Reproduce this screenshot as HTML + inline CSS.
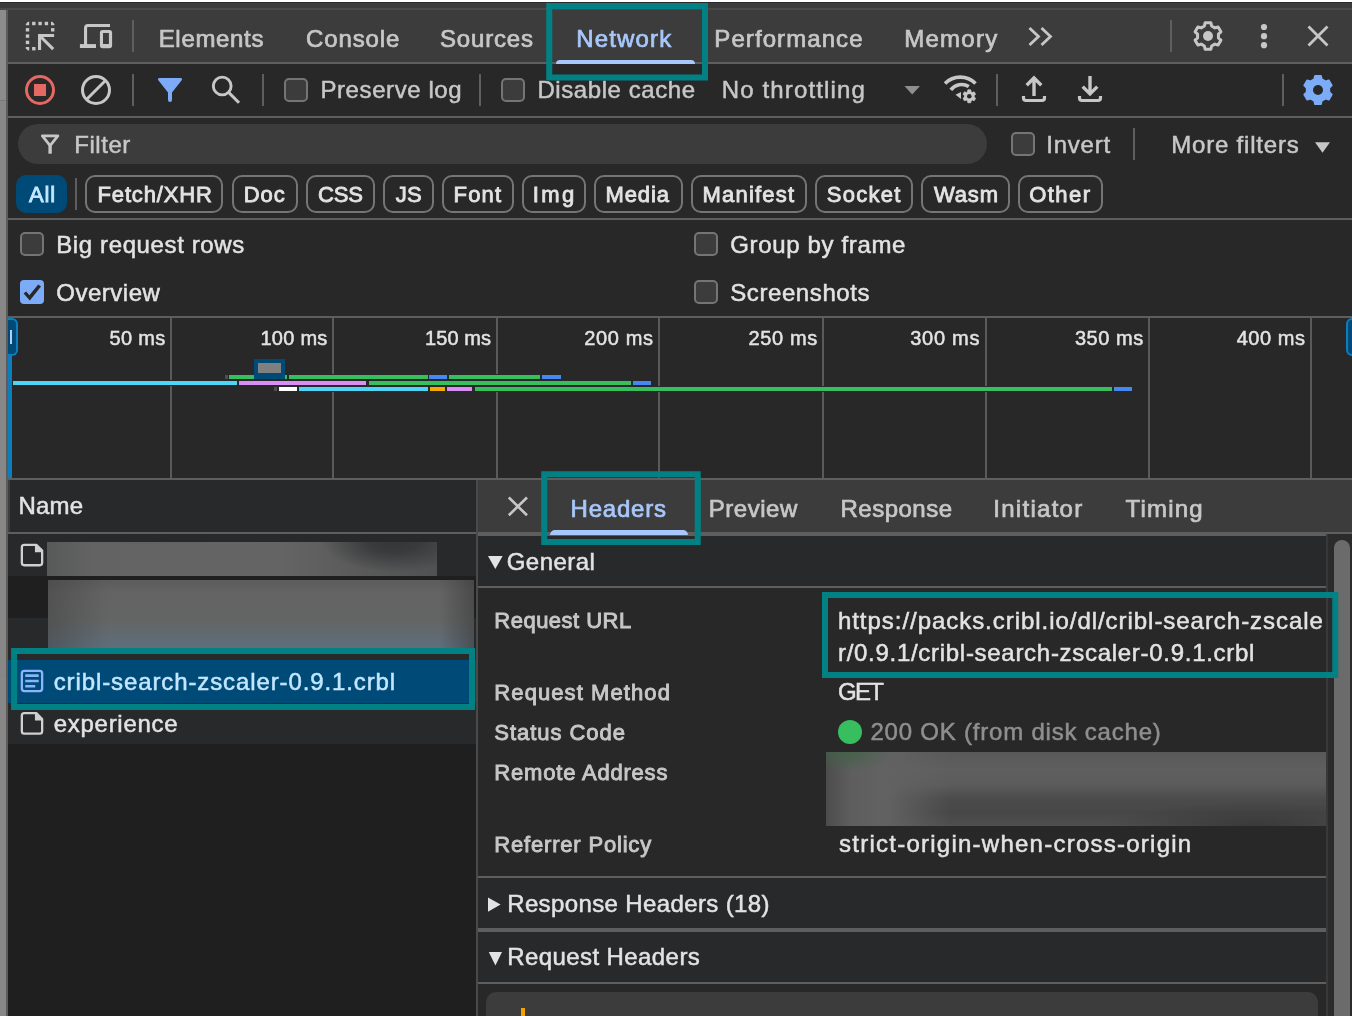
<!DOCTYPE html>
<html><head><meta charset="utf-8"><title>DevTools Network</title>
<style>
html,body{margin:0;padding:0;}
body{width:1352px;height:1016px;overflow:hidden;background:#282828;position:relative;font-family:"Liberation Sans", sans-serif;}
.b{position:absolute;}
.tl{position:absolute;left:0;top:0;width:1352px;height:1016px;will-change:transform;}
.t{position:absolute;white-space:nowrap;line-height:1;font-weight:400;}
svg.ov{position:absolute;left:0;top:0;}
</style></head><body>
<div class="b" style="left:0px;top:0px;width:1352px;height:2px;background:#ffffff;"></div>
<div class="b" style="left:0px;top:2px;width:1352px;height:1px;background:#2a2a2a;"></div>
<div class="b" style="left:0px;top:3px;width:1352px;height:5px;background:#3b3b3b;"></div>
<div class="b" style="left:0px;top:8px;width:1352px;height:2px;background:#484a48;"></div>
<div class="b" style="left:8px;top:10px;width:1344px;height:52px;background:#3c3c3c;"></div>
<div class="b" style="left:8px;top:62px;width:1344px;height:2px;background:#5e5e5e;"></div>
<div class="b" style="left:8px;top:64px;width:1344px;height:52px;background:#282828;"></div>
<div class="b" style="left:8px;top:116px;width:1344px;height:2px;background:#5e5e5e;"></div>
<div class="b" style="left:0px;top:10px;width:6px;height:90px;background:#8c8c8c;"></div>
<div class="b" style="left:0px;top:100px;width:6px;height:1px;background:#7a7a7a;"></div>
<div class="b" style="left:0px;top:101px;width:6px;height:915px;background:#878787;"></div>
<div class="b" style="left:6px;top:10px;width:2px;height:1006px;background:#5f5b58;"></div>
<div class="b" style="left:0px;top:678.5px;width:5px;height:1.6px;background:#7f8c9c;"></div>
<div class="b" style="left:132px;top:20px;width:2px;height:32px;background:#5e5e5e;"></div>
<div class="b" style="left:1170px;top:20px;width:2px;height:32px;background:#5e5e5e;"></div>
<div class="b" style="left:132px;top:74px;width:2px;height:32px;background:#5e5e5e;"></div>
<div class="b" style="left:262px;top:74px;width:2px;height:32px;background:#5e5e5e;"></div>
<div class="b" style="left:479px;top:74px;width:2px;height:32px;background:#5e5e5e;"></div>
<div class="b" style="left:996px;top:74px;width:2px;height:32px;background:#5e5e5e;"></div>
<div class="b" style="left:1282px;top:74px;width:2px;height:32px;background:#5e5e5e;"></div>
<div class="b" style="left:18px;top:124px;width:969px;height:40px;background:#3c3c3c;border-radius:20px;"></div>
<div class="b" style="left:1133px;top:128px;width:2px;height:32px;background:#5e5e5e;"></div>
<div class="b" style="left:16px;top:175px;width:50.75px;height:37.5px;background:#004a77;border-radius:10px;"></div>
<div class="b" style="left:85px;top:175px;width:138.25px;height:37.5px;background:transparent;border-radius:10px;border:2px solid #757575;box-sizing:border-box;"></div>
<div class="b" style="left:232px;top:175px;width:65.5px;height:37.5px;background:transparent;border-radius:10px;border:2px solid #757575;box-sizing:border-box;"></div>
<div class="b" style="left:306.25px;top:175px;width:68.75px;height:37.5px;background:transparent;border-radius:10px;border:2px solid #757575;box-sizing:border-box;"></div>
<div class="b" style="left:383px;top:175px;width:51.25px;height:37.5px;background:transparent;border-radius:10px;border:2px solid #757575;box-sizing:border-box;"></div>
<div class="b" style="left:442px;top:175px;width:71.75px;height:37.5px;background:transparent;border-radius:10px;border:2px solid #757575;box-sizing:border-box;"></div>
<div class="b" style="left:522px;top:175px;width:64.25px;height:37.5px;background:transparent;border-radius:10px;border:2px solid #757575;box-sizing:border-box;"></div>
<div class="b" style="left:594.25px;top:175px;width:88.25px;height:37.5px;background:transparent;border-radius:10px;border:2px solid #757575;box-sizing:border-box;"></div>
<div class="b" style="left:691.25px;top:175px;width:115.5px;height:37.5px;background:transparent;border-radius:10px;border:2px solid #757575;box-sizing:border-box;"></div>
<div class="b" style="left:815px;top:175px;width:98px;height:37.5px;background:transparent;border-radius:10px;border:2px solid #757575;box-sizing:border-box;"></div>
<div class="b" style="left:921.25px;top:175px;width:88.25px;height:37.5px;background:transparent;border-radius:10px;border:2px solid #757575;box-sizing:border-box;"></div>
<div class="b" style="left:1018.25px;top:175px;width:84.25px;height:37.5px;background:transparent;border-radius:10px;border:2px solid #757575;box-sizing:border-box;"></div>
<div class="b" style="left:75px;top:178px;width:2px;height:32px;background:#5e5e5e;"></div>
<div class="b" style="left:8px;top:218px;width:1344px;height:2px;background:#5e5e5e;"></div>
<div class="b" style="left:284px;top:78px;width:24px;height:24px;background:#3c3c3c;border-radius:5px;border:2px solid #757575;box-sizing:border-box;"></div>
<div class="b" style="left:501px;top:78px;width:24px;height:24px;background:#3c3c3c;border-radius:5px;border:2px solid #757575;box-sizing:border-box;"></div>
<div class="b" style="left:1011px;top:132px;width:24px;height:24px;background:#3c3c3c;border-radius:5px;border:2px solid #757575;box-sizing:border-box;"></div>
<div class="b" style="left:20px;top:232px;width:24px;height:24px;background:#3c3c3c;border-radius:5px;border:2px solid #757575;box-sizing:border-box;"></div>
<svg class="b" style="left:20px;top:280px" width="24" height="24" viewBox="0 0 24 24"><rect width="24" height="24" rx="4" fill="#7cacf8"/><path d="M3.6 13.6 L6.2 11.6 L9.4 15.2 L18.2 4.6 L21 6.6 L9.8 20.4 Z" fill="#282828"/></svg>
<div class="b" style="left:694px;top:232px;width:24px;height:24px;background:#3c3c3c;border-radius:5px;border:2px solid #757575;box-sizing:border-box;"></div>
<div class="b" style="left:694px;top:280px;width:24px;height:24px;background:#3c3c3c;border-radius:5px;border:2px solid #757575;box-sizing:border-box;"></div>
<div class="b" style="left:8px;top:316px;width:1344px;height:2px;background:#5e5e5e;"></div>
<div class="b" style="left:8px;top:478px;width:1344px;height:2px;background:#5e5e5e;"></div>
<div class="b" style="left:170px;top:318px;width:2px;height:160px;background:#5a5a5a;"></div>
<div class="b" style="left:332px;top:318px;width:2px;height:160px;background:#5a5a5a;"></div>
<div class="b" style="left:495.75px;top:318px;width:2px;height:160px;background:#5a5a5a;"></div>
<div class="b" style="left:658.25px;top:318px;width:2px;height:160px;background:#5a5a5a;"></div>
<div class="b" style="left:822px;top:318px;width:2px;height:160px;background:#5a5a5a;"></div>
<div class="b" style="left:984.5px;top:318px;width:2px;height:160px;background:#5a5a5a;"></div>
<div class="b" style="left:1148px;top:318px;width:2px;height:160px;background:#5a5a5a;"></div>
<div class="b" style="left:1310px;top:318px;width:2px;height:160px;background:#5a5a5a;"></div>
<div class="b" style="left:224px;top:374px;width:338px;height:6px;background:#282828;"></div>
<div class="b" style="left:12px;top:380px;width:641px;height:6px;background:#282828;"></div>
<div class="b" style="left:273px;top:386px;width:861px;height:6px;background:#282828;"></div>
<div class="b" style="left:225px;top:375px;width:2.5px;height:4.2px;background:#4e4e4e;"></div>
<div class="b" style="left:229.25px;top:375px;width:57.75px;height:4.2px;background:#37be5f;"></div>
<div class="b" style="left:289.25px;top:375px;width:138.25px;height:4.2px;background:#37be5f;"></div>
<div class="b" style="left:429.25px;top:375px;width:17.75px;height:4.2px;background:#4688f1;"></div>
<div class="b" style="left:449.25px;top:375px;width:90.75px;height:4.2px;background:#37be5f;"></div>
<div class="b" style="left:542px;top:375px;width:18.5px;height:4.2px;background:#4688f1;"></div>
<div class="b" style="left:13px;top:381.25px;width:223.75px;height:4.2px;background:#4fd3f7;"></div>
<div class="b" style="left:238.75px;top:381.25px;width:127.5px;height:4.2px;background:#d88ff5;"></div>
<div class="b" style="left:368.75px;top:381.25px;width:262.0px;height:4.2px;background:#37be5f;"></div>
<div class="b" style="left:632.75px;top:381.25px;width:18.5px;height:4.2px;background:#4688f1;"></div>
<div class="b" style="left:274.25px;top:387.25px;width:2.5px;height:4.2px;background:#4e4e4e;"></div>
<div class="b" style="left:278.75px;top:387.25px;width:18.25px;height:4.2px;background:#ffffff;"></div>
<div class="b" style="left:298.75px;top:387.25px;width:129.25px;height:4.2px;background:#4fd3f7;"></div>
<div class="b" style="left:430px;top:387.25px;width:15px;height:4.2px;background:#f5ab00;"></div>
<div class="b" style="left:447px;top:387.25px;width:25px;height:4.2px;background:#d88ff5;"></div>
<div class="b" style="left:474.5px;top:387.25px;width:637.75px;height:4.2px;background:#37be5f;"></div>
<div class="b" style="left:1114px;top:387.25px;width:18.25px;height:4.2px;background:#4688f1;"></div>
<div class="b" style="left:254.25px;top:359.25px;width:30.75px;height:20px;background:#004a77;"></div>
<div class="b" style="left:258.25px;top:363px;width:23px;height:9.5px;background:#808080;"></div>
<div class="b" style="left:8px;top:318px;width:4px;height:160px;background:#0a7ebf;"></div>
<div class="b" style="left:8px;top:318px;width:10px;height:38px;background:#004a77;border:2px solid #0a7ebf;border-left:none;border-radius:0 6px 6px 0;box-sizing:border-box;"></div>
<div class="b" style="left:10px;top:330px;width:2.2px;height:14px;background:#b4cdfc;"></div>
<div class="b" style="left:1346px;top:318px;width:12px;height:38px;background:#004a77;border:2px solid #0a7ebf;border-radius:6px 0 0 6px;box-sizing:border-box;"></div>
<div class="b" style="left:8px;top:480px;width:468px;height:52px;background:#28292a;"></div>
<div class="b" style="left:8px;top:480px;width:2px;height:52px;background:#3f3f3f;"></div>
<div class="b" style="left:8px;top:532px;width:468px;height:2px;background:#5e5e5e;"></div>
<div class="b" style="left:8px;top:534px;width:468px;height:42px;background:#28292a;"></div>
<div class="b" style="left:8px;top:576px;width:468px;height:42px;background:#1f1f1f;"></div>
<div class="b" style="left:8px;top:618px;width:468px;height:42px;background:#28292a;"></div>
<div class="b" style="left:8px;top:660px;width:468px;height:42.5px;background:#004a77;"></div>
<div class="b" style="left:8px;top:702.5px;width:468px;height:41.5px;background:#28292a;"></div>
<div class="b" style="left:8px;top:744px;width:468px;height:272px;background:#1f1f1f;"></div>
<div class="b" style="left:47px;top:542px;width:390px;height:34px;background:radial-gradient(ellipse 72px 30px at 89% 0%, rgba(52,54,56,1) 0%, rgba(52,54,56,.85) 35%, rgba(60,60,62,0) 100%),linear-gradient(90deg,#585959 0%,#636363 12%,#646464 60%,#5a5a5a 80%,#505152 100%);"></div>
<div class="b" style="left:48px;top:580px;width:426px;height:68px;background:linear-gradient(90deg,rgba(60,60,60,.45) 0%,rgba(70,70,70,0) 14%,rgba(70,70,70,0) 92%,rgba(50,50,50,.5) 100%),linear-gradient(180deg,#5c5c5c 0%,#636363 18%,#636565 58%,#5f6e7b 100%);"></div>
<div class="b" style="left:476px;top:480px;width:2px;height:536px;background:#4a4a4a;"></div>
<div class="b" style="left:478px;top:480px;width:874px;height:52.3px;background:#3c3c3c;"></div>
<div class="b" style="left:478px;top:532.3px;width:874px;height:3.7px;background:#5e5e5e;"></div>
<div class="b" style="left:478px;top:536px;width:848px;height:50px;background:#28292a;"></div>
<div class="b" style="left:478px;top:586px;width:848px;height:2px;background:#5e5e5e;"></div>
<div class="b" style="left:478px;top:588px;width:848px;height:288px;background:#282828;"></div>
<div class="b" style="left:478px;top:876px;width:848px;height:2px;background:#5e5e5e;"></div>
<div class="b" style="left:478px;top:878px;width:848px;height:50px;background:#28292a;"></div>
<div class="b" style="left:478px;top:928px;width:848px;height:4px;background:#5e5e5e;"></div>
<div class="b" style="left:478px;top:932px;width:848px;height:50px;background:#28292a;"></div>
<div class="b" style="left:478px;top:982px;width:848px;height:2px;background:#5e5e5e;"></div>
<div class="b" style="left:478px;top:984px;width:848px;height:32px;background:#282828;"></div>
<div class="b" style="left:486px;top:992px;width:832px;height:40px;background:#3c3c3c;border-radius:10px;"></div>
<div class="b" style="left:521.25px;top:1007.5px;width:3.75px;height:10px;background:#f5a300;"></div>
<div class="b" style="left:826px;top:752px;width:500px;height:74px;background:radial-gradient(ellipse 46px 20px at 4% 0%, rgba(66,98,72,.85), rgba(66,98,72,0) 100%),radial-gradient(ellipse 150px 24px at 86% 100%, rgba(56,56,56,.95), rgba(56,56,56,0) 100%),linear-gradient(90deg, rgba(76,76,76,1) 0%, rgba(94,94,94,1) 5%, rgba(98,98,98,1) 12%, rgba(96,96,96,0) 25%),linear-gradient(180deg,#595959 0%,#5f5f5f 25%,#5b5b5b 45%,#4b4b4b 63%,#474747 82%,#4f4f4f 100%);"></div>
<div class="b" style="left:838px;top:720px;width:24px;height:24px;background:#37be5f;border-radius:50%;"></div>
<div class="b" style="left:1326px;top:534px;width:1.6px;height:482px;background:#393939;"></div>
<div class="b" style="left:1327.6px;top:534px;width:24.4px;height:482px;background:#2b2b2b;"></div>
<div class="b" style="left:1334px;top:540px;width:15.8px;height:496px;background:#6b6b6b;border-radius:8px;"></div>
<div class="b" style="left:555.5px;top:59.5px;width:139px;height:4.5px;background:#a8c7fa;border-radius:5px 5px 0 0;"></div>
<div class="b" style="left:549.5px;top:529.5px;width:138.5px;height:5px;background:#a8c7fa;border-radius:5px 5px 0 0;"></div>
<div class="tl">
<span class="t" style="left:158.69px;top:26.93px;font-size:24px;letter-spacing:0.676px;color:#c7c7c7;-webkit-text-stroke:0.72px #c7c7c7;">Elements</span>
<span class="t" style="left:306.04px;top:26.93px;font-size:24px;letter-spacing:0.869px;color:#c7c7c7;-webkit-text-stroke:0.72px #c7c7c7;">Console</span>
<span class="t" style="left:440.04px;top:26.93px;font-size:24px;letter-spacing:0.814px;color:#c7c7c7;-webkit-text-stroke:0.72px #c7c7c7;">Sources</span>
<span class="t" style="left:714.29px;top:26.93px;font-size:24px;letter-spacing:1.088px;color:#c7c7c7;-webkit-text-stroke:0.72px #c7c7c7;">Performance</span>
<span class="t" style="left:904.29px;top:26.93px;font-size:24px;letter-spacing:1.250px;color:#c7c7c7;-webkit-text-stroke:0.72px #c7c7c7;">Memory</span>
<span class="t" style="left:576.29px;top:26.93px;font-size:24px;letter-spacing:1.151px;color:#a8c7fa;-webkit-text-stroke:0.72px #a8c7fa;">Network</span>
<span class="t" style="left:320.45px;top:78.43px;font-size:24px;letter-spacing:0.588px;color:#c7c7c7;-webkit-text-stroke:0.5px #c7c7c7;">Preserve log</span>
<span class="t" style="left:537.45px;top:78.43px;font-size:24px;letter-spacing:0.579px;color:#c7c7c7;-webkit-text-stroke:0.5px #c7c7c7;">Disable cache</span>
<span class="t" style="left:721.70px;top:78.43px;font-size:24px;letter-spacing:1.150px;color:#c7c7c7;-webkit-text-stroke:0.5px #c7c7c7;">No throttling</span>
<span class="t" style="left:74.20px;top:132.68px;font-size:24px;letter-spacing:0.552px;color:#c7c7c7;-webkit-text-stroke:0.5px #c7c7c7;">Filter</span>
<span class="t" style="left:1046.20px;top:132.68px;font-size:24px;letter-spacing:0.799px;color:#c7c7c7;-webkit-text-stroke:0.5px #c7c7c7;">Invert</span>
<span class="t" style="left:1171.20px;top:132.68px;font-size:24px;letter-spacing:0.810px;color:#c7c7c7;-webkit-text-stroke:0.5px #c7c7c7;">More filters</span>
<span class="t" style="left:29.09px;top:183.98px;font-size:22px;letter-spacing:0.754px;color:#c2e7ff;-webkit-text-stroke:0.85px #c2e7ff;">All</span>
<span class="t" style="left:97.59px;top:183.98px;font-size:22px;letter-spacing:0.828px;color:#e3e3e3;-webkit-text-stroke:0.85px #e3e3e3;">Fetch/XHR</span>
<span class="t" style="left:243.84px;top:183.98px;font-size:22px;letter-spacing:0.848px;color:#e3e3e3;-webkit-text-stroke:0.85px #e3e3e3;">Doc</span>
<span class="t" style="left:318.09px;top:183.98px;font-size:22px;letter-spacing:-0.246px;color:#e3e3e3;-webkit-text-stroke:0.85px #e3e3e3;">CSS</span>
<span class="t" style="left:395.84px;top:183.98px;font-size:22px;letter-spacing:0.070px;color:#e3e3e3;-webkit-text-stroke:0.85px #e3e3e3;">JS</span>
<span class="t" style="left:453.59px;top:183.98px;font-size:22px;letter-spacing:1.137px;color:#e3e3e3;-webkit-text-stroke:0.85px #e3e3e3;">Font</span>
<span class="t" style="left:532.84px;top:183.98px;font-size:22px;letter-spacing:2.316px;color:#e3e3e3;-webkit-text-stroke:0.85px #e3e3e3;">Img</span>
<span class="t" style="left:605.59px;top:183.98px;font-size:22px;letter-spacing:0.846px;color:#e3e3e3;-webkit-text-stroke:0.85px #e3e3e3;">Media</span>
<span class="t" style="left:702.59px;top:183.98px;font-size:22px;letter-spacing:1.184px;color:#e3e3e3;-webkit-text-stroke:0.85px #e3e3e3;">Manifest</span>
<span class="t" style="left:826.84px;top:183.98px;font-size:22px;letter-spacing:1.235px;color:#e3e3e3;-webkit-text-stroke:0.85px #e3e3e3;">Socket</span>
<span class="t" style="left:934.09px;top:183.98px;font-size:22px;letter-spacing:0.795px;color:#e3e3e3;-webkit-text-stroke:0.85px #e3e3e3;">Wasm</span>
<span class="t" style="left:1029.34px;top:183.98px;font-size:22px;letter-spacing:1.406px;color:#e3e3e3;-webkit-text-stroke:0.85px #e3e3e3;">Other</span>
<span class="t" style="left:56.20px;top:232.93px;font-size:24px;letter-spacing:0.624px;color:#e3e3e3;-webkit-text-stroke:0.5px #e3e3e3;">Big request rows</span>
<span class="t" style="left:56.20px;top:280.68px;font-size:24px;letter-spacing:0.523px;color:#e3e3e3;-webkit-text-stroke:0.5px #e3e3e3;">Overview</span>
<span class="t" style="left:730.20px;top:232.93px;font-size:24px;letter-spacing:0.651px;color:#e3e3e3;-webkit-text-stroke:0.5px #e3e3e3;">Group by frame</span>
<span class="t" style="left:730.20px;top:280.68px;font-size:24px;letter-spacing:0.594px;color:#e3e3e3;-webkit-text-stroke:0.5px #e3e3e3;">Screenshots</span>
<span class="t" style="left:109.45px;top:328.07px;font-size:20px;letter-spacing:0.347px;color:#e3e3e3;-webkit-text-stroke:0.5px #e3e3e3;">50 ms</span>
<span class="t" style="left:260.45px;top:328.07px;font-size:20px;letter-spacing:0.253px;color:#e3e3e3;-webkit-text-stroke:0.5px #e3e3e3;">100 ms</span>
<span class="t" style="left:424.95px;top:328.07px;font-size:20px;letter-spacing:0.103px;color:#e3e3e3;-webkit-text-stroke:0.5px #e3e3e3;">150 ms</span>
<span class="t" style="left:584.20px;top:328.07px;font-size:20px;letter-spacing:0.653px;color:#e3e3e3;-webkit-text-stroke:0.5px #e3e3e3;">200 ms</span>
<span class="t" style="left:748.45px;top:328.07px;font-size:20px;letter-spacing:0.653px;color:#e3e3e3;-webkit-text-stroke:0.5px #e3e3e3;">250 ms</span>
<span class="t" style="left:910.20px;top:328.07px;font-size:20px;letter-spacing:0.723px;color:#e3e3e3;-webkit-text-stroke:0.5px #e3e3e3;">300 ms</span>
<span class="t" style="left:1074.95px;top:328.07px;font-size:20px;letter-spacing:0.553px;color:#e3e3e3;-webkit-text-stroke:0.5px #e3e3e3;">350 ms</span>
<span class="t" style="left:1236.70px;top:328.07px;font-size:20px;letter-spacing:0.553px;color:#e3e3e3;-webkit-text-stroke:0.5px #e3e3e3;">400 ms</span>
<span class="t" style="left:18.45px;top:494.18px;font-size:24px;letter-spacing:0.226px;color:#e3e3e3;-webkit-text-stroke:0.5px #e3e3e3;">Name</span>
<span class="t" style="left:53.70px;top:669.68px;font-size:24px;letter-spacing:0.889px;color:#c2e7ff;-webkit-text-stroke:0.5px #c2e7ff;">cribl-search-zscaler-0.9.1.crbl</span>
<span class="t" style="left:53.70px;top:711.68px;font-size:24px;letter-spacing:0.726px;color:#e3e3e3;-webkit-text-stroke:0.5px #e3e3e3;">experience</span>
<span class="t" style="left:570.54px;top:496.68px;font-size:24px;letter-spacing:0.785px;color:#a8c7fa;-webkit-text-stroke:0.72px #a8c7fa;">Headers</span>
<span class="t" style="left:708.79px;top:496.68px;font-size:24px;letter-spacing:0.524px;color:#c7c7c7;-webkit-text-stroke:0.72px #c7c7c7;">Preview</span>
<span class="t" style="left:840.54px;top:496.68px;font-size:24px;letter-spacing:0.493px;color:#c7c7c7;-webkit-text-stroke:0.72px #c7c7c7;">Response</span>
<span class="t" style="left:993.29px;top:496.68px;font-size:24px;letter-spacing:1.277px;color:#c7c7c7;-webkit-text-stroke:0.72px #c7c7c7;">Initiator</span>
<span class="t" style="left:1125.54px;top:496.68px;font-size:24px;letter-spacing:1.180px;color:#c7c7c7;-webkit-text-stroke:0.72px #c7c7c7;">Timing</span>
<span class="t" style="left:506.70px;top:549.78px;font-size:24px;letter-spacing:0.467px;color:#e3e3e3;-webkit-text-stroke:0.5px #e3e3e3;">General</span>
<span class="t" style="left:494.36px;top:609.78px;font-size:22px;letter-spacing:0.470px;color:#c7c7c7;-webkit-text-stroke:0.9px #c7c7c7;">Request URL</span>
<span class="t" style="left:494.36px;top:681.78px;font-size:22px;letter-spacing:1.083px;color:#c7c7c7;-webkit-text-stroke:0.9px #c7c7c7;">Request Method</span>
<span class="t" style="left:494.36px;top:721.78px;font-size:22px;letter-spacing:0.944px;color:#c7c7c7;-webkit-text-stroke:0.9px #c7c7c7;">Status Code</span>
<span class="t" style="left:494.36px;top:761.78px;font-size:22px;letter-spacing:0.802px;color:#c7c7c7;-webkit-text-stroke:0.9px #c7c7c7;">Remote Address</span>
<span class="t" style="left:494.36px;top:833.78px;font-size:22px;letter-spacing:0.807px;color:#c7c7c7;-webkit-text-stroke:0.9px #c7c7c7;">Referrer Policy</span>
<span class="t" style="left:837.95px;top:608.78px;font-size:24px;letter-spacing:0.958px;color:#e3e3e3;-webkit-text-stroke:0.5px #e3e3e3;">https://packs.cribl.io/dl/cribl-search-zscale</span>
<span class="t" style="left:837.95px;top:640.78px;font-size:24px;letter-spacing:0.710px;color:#e3e3e3;-webkit-text-stroke:0.5px #e3e3e3;">r/0.9.1/cribl-search-zscaler-0.9.1.crbl</span>
<span class="t" style="left:837.95px;top:680.43px;font-size:24px;letter-spacing:-1.663px;color:#e3e3e3;-webkit-text-stroke:0.5px #e3e3e3;">GET</span>
<span class="t" style="left:870.45px;top:720.43px;font-size:24px;letter-spacing:0.793px;color:#8f8f8f;-webkit-text-stroke:0.5px #8f8f8f;">200 OK (from disk cache)</span>
<span class="t" style="left:839.00px;top:831.98px;font-size:24px;letter-spacing:1.247px;color:#e3e3e3;-webkit-text-stroke:0.5px #e3e3e3;">strict-origin-when-cross-origin</span>
<span class="t" style="left:507.20px;top:892.18px;font-size:24px;letter-spacing:0.377px;color:#e3e3e3;-webkit-text-stroke:0.5px #e3e3e3;">Response Headers (18)</span>
<span class="t" style="left:507.20px;top:945.43px;font-size:24px;letter-spacing:0.416px;color:#e3e3e3;-webkit-text-stroke:0.5px #e3e3e3;">Request Headers</span>
</div>
<svg class="ov" width="1352" height="1016" viewBox="0 0 1352 1016">
<polygon points="27.91,21.80 29.20,21.80 29.20,25.20 25.80,25.20 25.80,23.91" fill="#c7c7c7"/>
<polygon points="51.00,21.80 52.29,21.80 54.40,23.91 54.40,25.20 51.00,25.20" fill="#c7c7c7"/>
<polygon points="25.80,47.00 29.20,47.00 29.20,50.40 27.91,50.40 25.80,48.29" fill="#c7c7c7"/>
<rect x="32.10" y="21.80" width="3.4" height="3.4" fill="#c7c7c7"/>
<rect x="25.80" y="28.10" width="3.4" height="3.4" fill="#c7c7c7"/>
<rect x="38.40" y="21.80" width="3.4" height="3.4" fill="#c7c7c7"/>
<rect x="25.80" y="34.40" width="3.4" height="3.4" fill="#c7c7c7"/>
<rect x="44.70" y="21.80" width="3.4" height="3.4" fill="#c7c7c7"/>
<rect x="25.80" y="40.70" width="3.4" height="3.4" fill="#c7c7c7"/>
<rect x="32.10" y="47.00" width="3.4" height="3.4" fill="#c7c7c7"/>
<rect x="51.00" y="28.10" width="3.4" height="3.4" fill="#c7c7c7"/>
<path d="M39.55,50.1 V35.55 H54.1" fill="none" stroke="#c7c7c7" stroke-width="3.1"/><path d="M40.5,36.5 L53.2,49.1" fill="none" stroke="#c7c7c7" stroke-width="3.1"/>
<path d="M110,25.5 H88 Q85.55,25.5 85.55,28 V45" fill="none" stroke="#c7c7c7" stroke-width="3.1"/><rect x="79.9" y="44.1" width="16.1" height="3.9" fill="#c7c7c7"/>
<path fill-rule="evenodd" d="M102.6,29.9 H109.4 Q112.1,29.9 112.1,32.6 V45.5 Q112.1,48.2 109.4,48.2 H102.6 Q99.9,48.2 99.9,45.5 V32.6 Q99.9,29.9 102.6,29.9 Z M103,33 V43.9 H108.9 V33 Z" fill="#c7c7c7"/>
<circle cx="40" cy="90" r="13.5" fill="none" stroke="#e46962" stroke-width="3"/><rect x="34" y="84" width="12" height="12" fill="#e46962"/>
<circle cx="96" cy="90" r="13.5" fill="none" stroke="#c7c7c7" stroke-width="3"/><path d="M86.5,99.5 L105.5,80.5" stroke="#c7c7c7" stroke-width="3"/>
<path d="M160,78 H180 Q183.5,78 181.3,80.8 L172,92.5 V100 Q172,102 170,102 Q168,102 168,100 V92.5 L158.7,80.8 Q156.5,78 160,78 Z" fill="#7cacf8"/>
<circle cx="222.2" cy="86" r="8.9" fill="none" stroke="#c7c7c7" stroke-width="2.9"/><path d="M228.6,92.4 L239,102.8" stroke="#c7c7c7" stroke-width="3"/>
<path d="M904.5,86 H920 L912.2,94.5 Z" fill="#8f8f8f"/>
<path d="M945,83.5 A21.5,21.5 0 0 1 975.5,83.5" fill="none" stroke="#c7c7c7" stroke-width="3.6"/>
<path d="M950.8,89.8 A13.5,13.5 0 0 1 968.8,86.6" fill="none" stroke="#c7c7c7" stroke-width="3.6"/>
<path d="M955.5,94.8 L961,92 V99 Z" fill="#c7c7c7"/>
<path d="M967.59,91.71 L967.86,89.86 L970.74,89.86 L971.01,91.71 L972.42,92.52 L974.16,91.83 L975.60,94.33 L974.13,95.48 L974.13,97.12 L975.60,98.27 L974.16,100.77 L972.42,100.08 L971.01,100.89 L970.74,102.74 L967.86,102.74 L967.59,100.89 L966.18,100.08 L964.44,100.77 L963.00,98.27 L964.47,97.12 L964.47,95.48 L963.00,94.33 L964.44,91.83 L966.18,92.52Z" fill="#c7c7c7" stroke="#c7c7c7" stroke-width="0.8" stroke-linejoin="round"/><circle cx="969.3" cy="96.3" r="2.3" fill="#282828"/>
<path d="M1034,96 V78.5 M1026.7,85.3 L1034,78 L1041.3,85.3" fill="none" stroke="#c7c7c7" stroke-width="3.4"/><path d="M1023.5,96 V98 Q1023.5,100.5 1026,100.5 H1042 Q1044.5,100.5 1044.5,98 V96" fill="none" stroke="#c7c7c7" stroke-width="3.2"/>
<path d="M1090,76 V93 M1082.7,86.6 L1090,93.9 L1097.3,86.6" fill="none" stroke="#c7c7c7" stroke-width="3.4"/><path d="M1079.5,96 V98 Q1079.5,100.5 1082,100.5 H1098 Q1100.5,100.5 1100.5,98 V96" fill="none" stroke="#c7c7c7" stroke-width="3.2"/>
<path d="M1029.5,28 L1038.5,36.5 L1029.5,45 M1041.5,28 L1050.5,36.5 L1041.5,45" fill="none" stroke="#c7c7c7" stroke-width="2.8"/>
<path d="M1204.41,26.03 L1205.17,22.70 L1210.83,22.70 L1211.59,26.03 L1214.84,27.90 L1218.11,26.90 L1220.93,31.80 L1218.43,34.12 L1218.43,37.88 L1220.93,40.20 L1218.11,45.10 L1214.84,44.10 L1211.59,45.97 L1210.83,49.30 L1205.17,49.30 L1204.41,45.97 L1201.16,44.10 L1197.89,45.10 L1195.07,40.20 L1197.57,37.88 L1197.57,34.12 L1195.07,31.80 L1197.89,26.90 L1201.16,27.90Z" fill="none" stroke="#c7c7c7" stroke-width="3" stroke-linejoin="round"/><circle cx="1208" cy="36" r="5" fill="#c7c7c7"/>
<circle cx="1264" cy="27" r="3.1" fill="#c7c7c7"/>
<circle cx="1264" cy="36.2" r="3.1" fill="#c7c7c7"/>
<circle cx="1264" cy="45.2" r="3.1" fill="#c7c7c7"/>
<path d="M1308.5,26.5 L1327.5,45.5 M1327.5,26.5 L1308.5,45.5" stroke="#c7c7c7" stroke-width="2.8"/>
<path d="M1314.07,79.09 L1314.96,75.72 L1321.04,75.72 L1321.93,79.09 L1325.49,81.14 L1328.85,80.23 L1331.89,85.49 L1329.42,87.95 L1329.42,92.05 L1331.89,94.51 L1328.85,99.77 L1325.49,98.86 L1321.93,100.91 L1321.04,104.28 L1314.96,104.28 L1314.07,100.91 L1310.51,98.86 L1307.15,99.77 L1304.11,94.51 L1306.58,92.05 L1306.58,87.95 L1304.11,85.49 L1307.15,80.23 L1310.51,81.14Z" fill="#7cacf8" stroke="#7cacf8" stroke-width="1.5" stroke-linejoin="round"/><circle cx="1318" cy="90" r="5" fill="#282828"/>
<path d="M42.3,135.8 H57.9 L50.1,145.6 Z" fill="none" stroke="#c7c7c7" stroke-width="2.7" stroke-linejoin="round"/><path d="M50.1,145 V153.7" stroke="#c7c7c7" stroke-width="3.4"/>
<path d="M1315,142.2 H1330 L1322.5,152.8 Z" fill="#c7c7c7"/>
<path d="M24.249999999999996,544.85 H36.35 L42.15,550.65 V562.85 Q42.15,565.25 39.75,565.25 H24.249999999999996 Q21.849999999999998,565.25 21.849999999999998,562.85 V547.25 Q21.849999999999998,544.85 24.249999999999996,544.85 Z" fill="none" stroke="#d0d0d0" stroke-width="2.3" stroke-linejoin="round"/><path d="M34.95,544.85 H36.35 L42.15,550.65 V552.25 H34.95 Z" fill="#d0d0d0"/>
<path d="M24.249999999999996,713.15 H36.35 L42.15,718.9499999999999 V731.15 Q42.15,733.55 39.75,733.55 H24.249999999999996 Q21.849999999999998,733.55 21.849999999999998,731.15 V715.55 Q21.849999999999998,713.15 24.249999999999996,713.15 Z" fill="none" stroke="#d0d0d0" stroke-width="2.3" stroke-linejoin="round"/><path d="M34.95,713.15 H36.35 L42.15,718.9499999999999 V720.55 H34.95 Z" fill="#d0d0d0"/>
<rect x="21.85" y="670.85" width="20.3" height="20.3" rx="2.6" fill="none" stroke="#8ab4fb" stroke-width="2.3"/><path d="M25.25,675.65 H38.7 M25.25,680.95 H38.7 M25.25,686.2 H35.2" stroke="#8ab4fb" stroke-width="2.6"/>
<path d="M488,556.1 H502.6 L495.3,568.9 Z" fill="#e3e3e3"/>
<path d="M488,897.5 L500.6,904.6 L488,911.7 Z" fill="#e3e3e3"/>
<path d="M488.8,952 H502 L495.4,965.5 Z" fill="#e3e3e3"/>
<path d="M508.8,497.5 L527,515.3 M527,497.5 L508.8,515.3" stroke="#c7c7c7" stroke-width="2.6"/>
<rect x="549.25" y="6.0" width="155.75" height="71.5" fill="none" stroke="#028184" stroke-width="6"/>
<rect x="544.25" y="474.25" width="153.5" height="67.75" fill="none" stroke="#028184" stroke-width="6"/>
<rect x="14.1" y="651.0" width="457.9" height="56" fill="none" stroke="#028184" stroke-width="6"/>
<rect x="825.0" y="595.0" width="510.25" height="80" fill="none" stroke="#028184" stroke-width="6"/>
</svg>
</body></html>
